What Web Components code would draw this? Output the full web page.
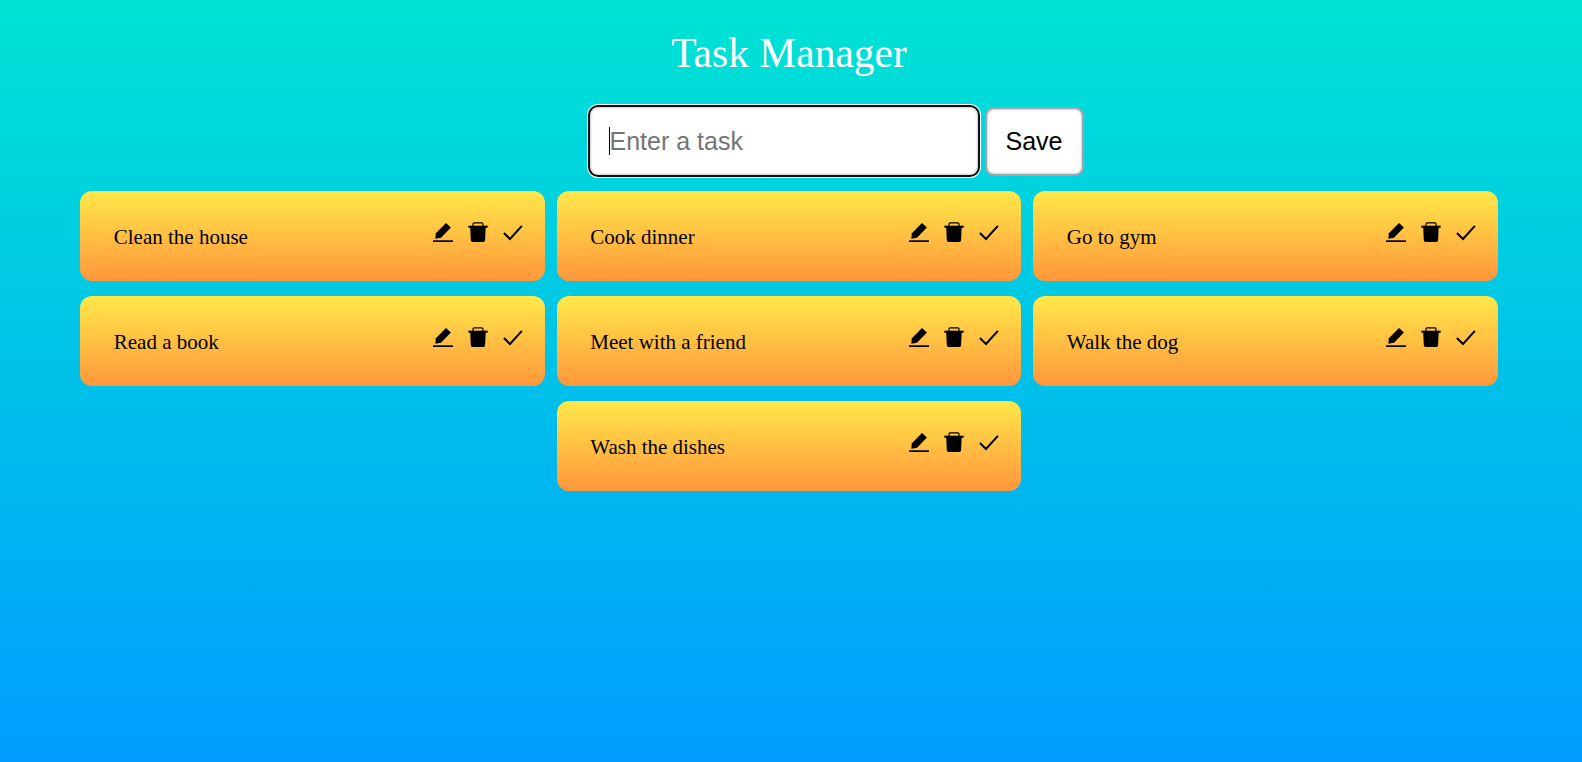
<!DOCTYPE html>
<html>
<head>
<meta charset="utf-8">
<title>Task Manager</title>
<style>
  html, body { margin: 0; height: 100%; }
  body { font-family: "Liberation Serif", serif; }
</style>
</head>
<body>
<task-app>
  <task-form slot="form"></task-form>
  <task-card>Clean the house</task-card>
  <task-card>Cook dinner</task-card>
  <task-card>Go to gym</task-card>
  <task-card>Read a book</task-card>
  <task-card>Meet with a friend</task-card>
  <task-card>Walk the dog</task-card>
  <task-card>Wash the dishes</task-card>
</task-app>
<script>
class TaskApp extends HTMLElement {
  constructor() {
    super();
    this.attachShadow({ mode: 'open' })
  }

  connectedCallback() {
    this.shadowRoot.innerHTML = `
    <style>
      :host{
        display: flex;
        flex-direction: column;
        align-items: center;
        box-sizing: border-box;
        min-height: 762px;
        padding-right: 4px;
        background: linear-gradient(180deg, #00e4d4, #009dff);
      }
      h1{
        margin: 29px 0 28px;
        font-size: 41.5px;
        line-height: 48px;
        font-weight: 400;
        color: #fff;
      }
      .list{
        width: 1419px;
        margin-top: 14px;
        display: flex;
        flex-wrap: wrap;
        justify-content: center;
        gap: 15px 12px;
      }
    </style>
    <h1>Task Manager</h1>
    <slot name="form"></slot>
    <div class="list"><slot></slot></div>
    `
  }
}

customElements.define('task-app', TaskApp);

class TaskForm extends HTMLElement {
  constructor() {
    super();
    this.attachShadow({ mode: 'open' })
  }

  connectedCallback() {
    this.shadowRoot.innerHTML = `
    <style>
      :host{
        display: flex;
        flex-direction: row;
        align-items: center;
        gap: 5px;
        margin-left: 93px;
      }
      .field{
        position: relative;
        display: flex;
      }
      input{
        width: 392px;
        height: 72px;
        box-sizing: border-box;
        padding: 0 20px;
        border: 2px solid #101010;
        border-radius: 10px;
        outline: none;
        box-shadow: 0 0 0 1px #fff, inset 0 0 3px #999;
        background: #fff;
        font: 25px "Liberation Sans", sans-serif;
        color: #000;
      }
      input::placeholder{ color: #757575; }
      .caret{
        position: absolute;
        left: 21px;
        top: 22px;
        width: 1px;
        height: 28px;
        background: #000;
      }
      button{
        width: 99px;
        height: 69px;
        box-sizing: border-box;
        border: 2px solid #a3a2aa;
        border-radius: 9px;
        box-shadow: inset 0 0 3px #aaa;
        background: #fff;
        color: #000;
        font: 25px "Liberation Sans", sans-serif;
        padding: 0;
      }
    </style>
    <div class="field">
      <input type="text" placeholder="Enter a task">
      <div class="caret"></div>
    </div>
    <button>Save</button>
    `
  }
}

customElements.define('task-form', TaskForm);

class TaskCard extends HTMLElement {
  constructor() {
    super();
    this.attachShadow({ mode: 'open' })
  }

  connectedCallback() {
    this.shadowRoot.innerHTML = `
    <style>
      :host{
        width: 464.5px;
        height: 90px;
        box-sizing: border-box;
        padding: 0 22px 0 33.5px;
        border-radius: 12px;
        background: linear-gradient(180deg, #ffe84a, #ff973c);
        color: #000;
        display: flex;
        flex-direction: row;
        align-items: center;
        justify-content: space-between;
        font-family: "Liberation Serif", serif;
        font-size: 21px;
      }
      span{ padding-top: 2px; }
      .icons{
        display: flex;
        flex-direction: row;
        gap: 15px;
        margin-bottom: 8px;
      }
      svg{ display: block; width: 20px; height: 20px; }
    </style>
    <span><slot></slot></span>
    <div class="icons">
      <svg viewBox="0 0 20 20" aria-label="edit">
        <path d="M13 1l4.900 4.500L8 15.800l-5.700 1 .6-5.500z" fill="#000"/>
        <rect x="0" y="18.300" width="20" height="1.700" fill="#000"/>
      </svg>
      <svg viewBox="0 0 20 20" aria-label="delete">
        <path d="M5 4V2c0-.8.500-1.200 1.200-1.200h7.600c.7 0 1.200.4 1.200 1.200v2" fill="none" stroke="#000" stroke-width="1.200"/>
        <rect x=".3" y="3.700" width="19.400" height="2" fill="#000"/>
        <path d="M2.200 5h15.500l-.6 13c-.1 1.200-.8 2-1.900 2H4.700c-1.100 0-1.800-.8-1.900-2z" fill="#000"/>
      </svg>
      <svg viewBox="0 0 20 20" aria-label="done">
        <path d="M.9 11l6.100 6L18.900 3.900" fill="none" stroke="#000" stroke-width="2"/>
      </svg>
    </div>
    `
  }
}

customElements.define('task-card', TaskCard);
</script>
</body>
</html>
